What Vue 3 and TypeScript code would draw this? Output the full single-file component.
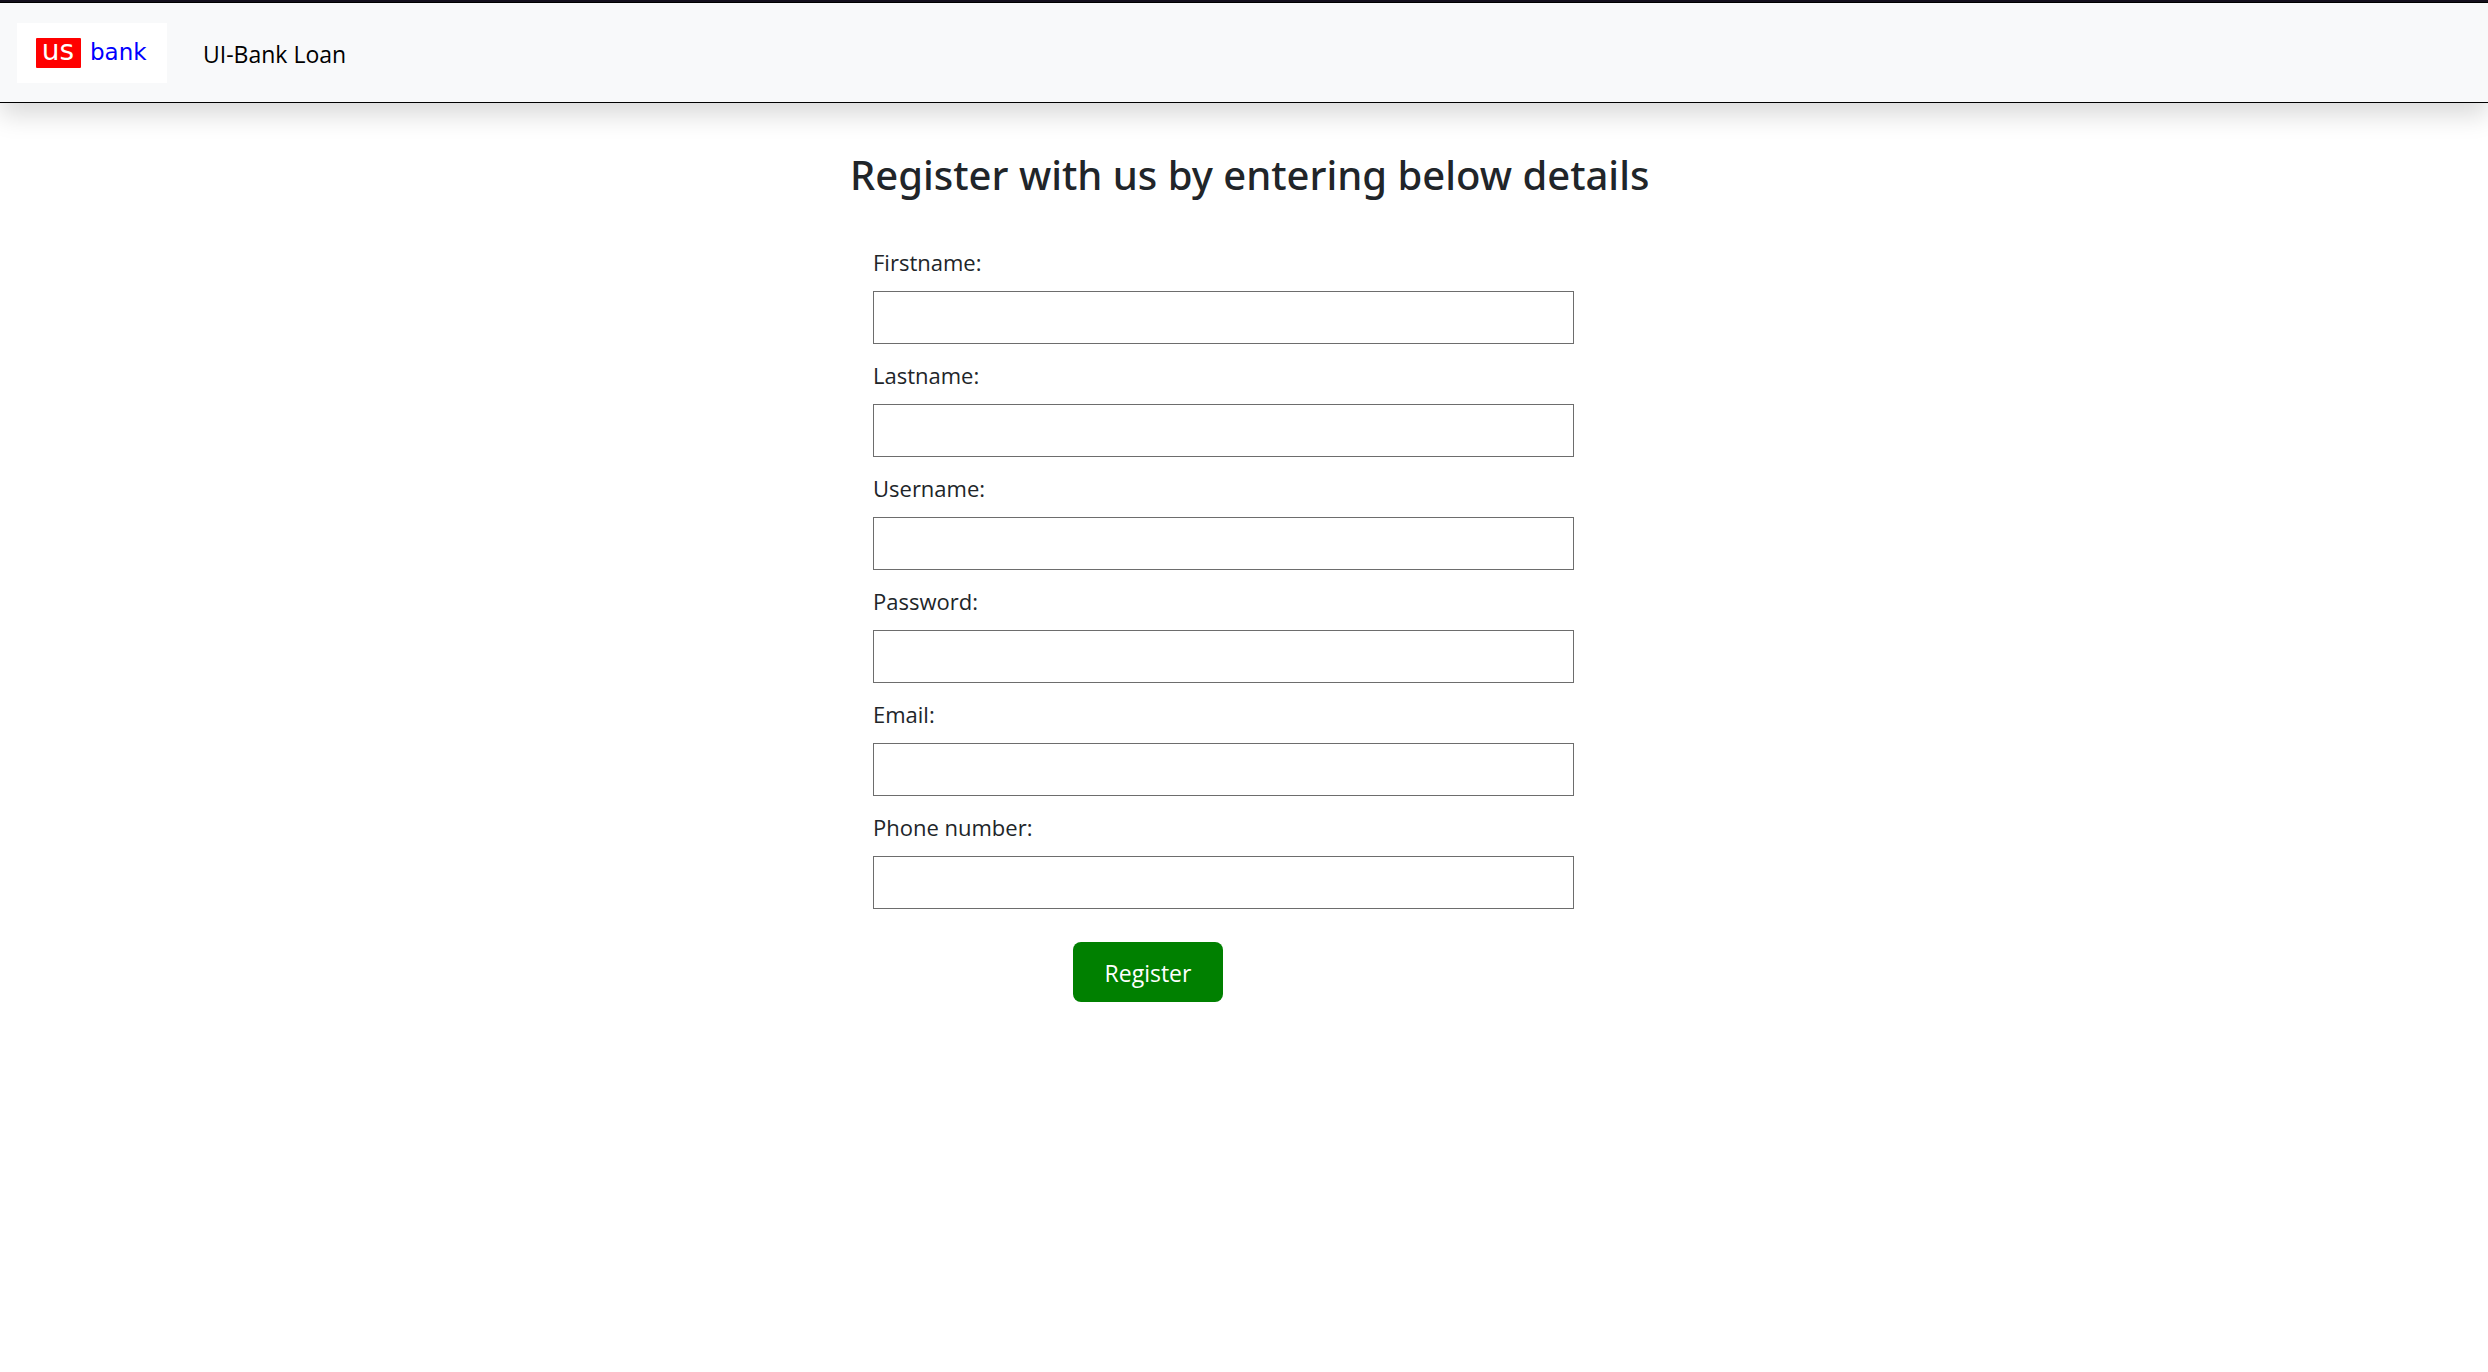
<script setup lang="ts">
import { reactive } from 'vue'

interface Field {
  id: string
  label: string
  type: string
}

const fields: Field[] = [
  { id: 'firstname', label: 'Firstname:', type: 'text' },
  { id: 'lastname', label: 'Lastname:', type: 'text' },
  { id: 'username', label: 'Username:', type: 'text' },
  { id: 'password', label: 'Password:', type: 'password' },
  { id: 'email', label: 'Email:', type: 'email' },
  { id: 'phone', label: 'Phone number:', type: 'tel' },
]

const form = reactive<Record<string, string>>({})
</script>

<template>
  <div class="page">
    <header class="navbar">
      <a class="brand" href="#" aria-label="US bank">
        <svg width="150" height="60" viewBox="0 0 150 60">
          <rect width="150" height="60" fill="#fff" />
          <rect x="19" y="15" width="45" height="30" rx="1" fill="#f00" />
          <text x="41" y="37" class="logo-us">us</text>
          <text x="73" y="37" class="logo-bank">bank</text>
        </svg>
      </a>
      <a class="nav-link" href="#">UI-Bank Loan</a>
    </header>

    <main class="content">
      <h1 class="title">Register with us by entering below details</h1>
      <form class="form" @submit.prevent>
        <div v-for="field in fields" :key="field.id" class="field">
          <label :for="field.id">{{ field.label }}</label>
          <input :id="field.id" v-model="form[field.id]" :type="field.type" />
        </div>
        <button type="submit" class="submit">Register</button>
      </form>
    </main>
  </div>
</template>

<style>
body {
  margin: 0;
  background: #fff;
}
</style>

<style scoped>
.page {
  border-top: 2px solid #15111e;
  font-family: 'Segoe UI', 'Open Sans', sans-serif;
  font-size: 23px;
  line-height: 36px;
  color: #212529;
}

.navbar {
  display: flex;
  align-items: center;
  gap: 36px;
  box-sizing: border-box;
  height: 101px;
  padding: 0 17px;
  border: solid #000;
  border-width: 1px 0;
  background: #f8f9fa;
  box-shadow: 0 12px 24px rgba(0, 0, 0, 0.15);
}

.brand {
  display: block;
  height: 60px;
}

.brand svg {
  display: block;
}

.logo-us {
  font-family: 'DejaVu Sans', sans-serif;
  font-size: 28px;
  fill: #fff;
  text-anchor: middle;
}

.logo-bank {
  font-family: 'DejaVu Sans', sans-serif;
  font-size: 23px;
  fill: #00f;
}

.nav-link {
  padding-top: 2px;
  color: #000;
  text-decoration: none;
}

.content {
  box-sizing: border-box;
  max-width: 800px;
  margin: 0 auto;
  padding: 48px 0 48px 6px;
}

.title {
  margin: 0 0 36px;
  font-family: 'Segoe UI', 'Noto Sans', sans-serif;
  font-size: 40px;
  line-height: 48px;
  font-weight: 500;
  white-space: nowrap;
}

.form {
  max-width: 701px;
  padding: 9px 0 0 23px;
}

.field {
  display: flex;
  flex-direction: column;
  gap: 11px;
  margin-bottom: 13px;
}

.field label {
  font-size: 22px;
}

.field input {
  box-sizing: border-box;
  width: 100%;
  height: 53px;
  padding: 0 12px;
  border: 1px solid #6d6d6d;
  border-radius: 0;
  background: #fff;
  font: inherit;
  color: inherit;
}

.submit {
  display: block;
  width: 150px;
  height: 60px;
  margin: 33px 0 0 200px;
  padding: 2px 0 0;
  border: 0;
  border-radius: 8px;
  background: #008000;
  color: #fff;
  font: inherit;
}
</style>
